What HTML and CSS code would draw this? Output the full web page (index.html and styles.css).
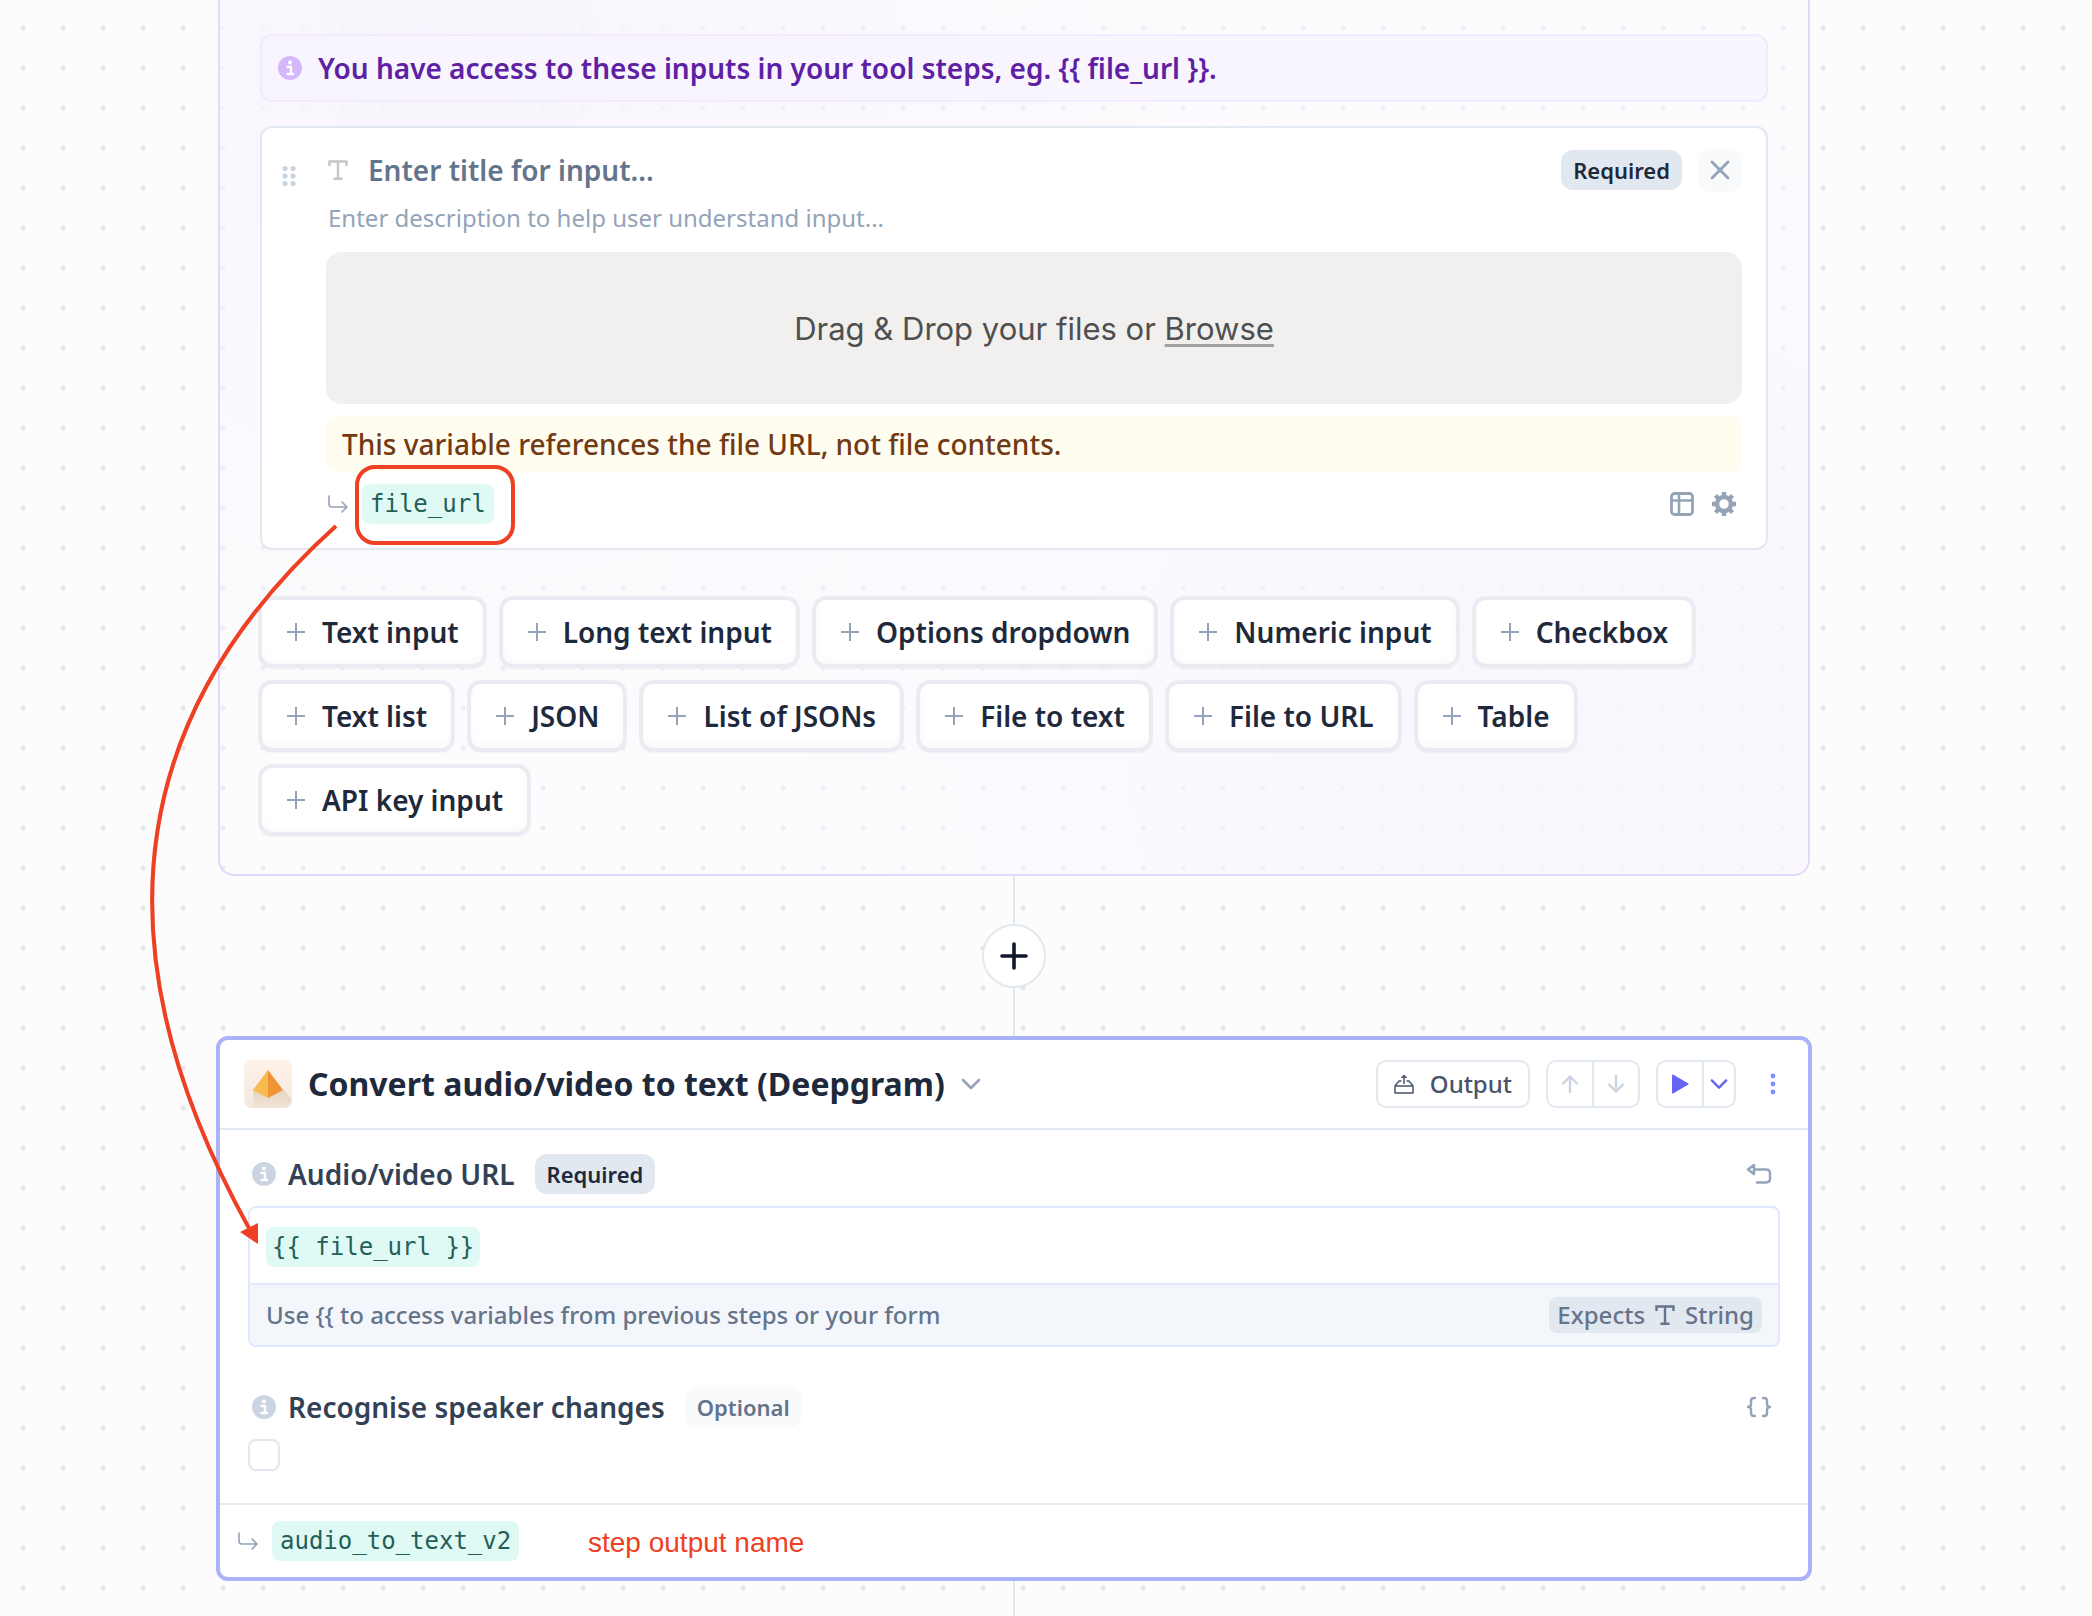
FILE: index.html
```html
<!DOCTYPE html>
<html lang="en">
<head>
<meta charset="utf-8">
<title>Tool builder</title>
<link rel="stylesheet" href="styles.css">
</head>
<body>
<svg class="sprite" aria-hidden="true">
  <symbol id="info" viewBox="0 0 24 24"><circle cx="12" cy="12" r="12" fill="currentColor"/><circle cx="12" cy="6.500" r="2" fill="#fff"/><path d="M9.500 11h3.500v6.500M9.500 18h5.500" fill="none" stroke="#fff" stroke-width="2.400" stroke-linecap="round" stroke-linejoin="round"/></symbol>
  <symbol id="type" viewBox="0 0 20 20"><path d="M1.500 6V1.500h17V6M10 1.500v17M5.500 18.800h9" fill="none" stroke="currentColor" stroke-width="2.400"/></symbol>
  <symbol id="plus" viewBox="0 0 20 20"><path d="M10 1v18M1 10h18" fill="none" stroke="currentColor" stroke-width="2"/></symbol>
  <symbol id="hook" viewBox="0 0 20 20"><path d="M1 2v8q0 3 3 3h14M14 8l5 5-5 5" fill="none" stroke="currentColor" stroke-width="1.600" stroke-linecap="round" stroke-linejoin="round"/></symbol>
  <symbol id="chevron" viewBox="0 0 20 20"><path d="M2 6l8 8 8-8" fill="none" stroke="currentColor" stroke-width="2.600" stroke-linecap="round" stroke-linejoin="round"/></symbol>
</svg>
<main class="canvas">
  <section class="inputs" aria-label="Inputs">
    <p class="notice"><svg class="i24"><use href="#info"/></svg>You have access to these inputs in your tool steps, eg. {{ file_url }}.</p>
    <article class="field-card">
      <button class="grip" aria-label="Reorder"><svg width="14" height="22" viewBox="0 0 14 22" fill="currentColor"><circle cx="3" cy="3.500" r="2.600"/><circle cx="11" cy="3.500" r="2.600"/><circle cx="3" cy="11" r="2.600"/><circle cx="11" cy="11" r="2.600"/><circle cx="3" cy="18.500" r="2.600"/><circle cx="11" cy="18.500" r="2.600"/></svg></button>
      <div class="field-main">
        <div class="field-head">
          <svg class="i20 faint"><use href="#type"/></svg>
          <input class="title-input" type="text" placeholder="Enter title for input..." aria-label="Input title">
          <span class="badge">Required</span>
          <button class="close" aria-label="Remove input"><svg width="20" height="20" viewBox="0 0 20 20"><path d="M2 2l16 16M18 2L2 18" stroke="currentColor" stroke-width="2.800" stroke-linecap="round"/></svg></button>
        </div>
        <input class="desc-input" type="text" placeholder="Enter description to help user understand input..." aria-label="Input description">
        <div class="dropzone"><span>Drag &amp; Drop your files or <a href="#browse">Browse</a></span></div>
        <p class="warning">This variable references the file URL, not file contents.</p>
        <div class="var-row">
          <svg class="i20"><use href="#hook"/></svg>
          <code class="chip">file_url</code>
          <span class="spacer"></span>
          <button class="icon-btn" aria-label="Table view"><svg width="24" height="24" viewBox="0 0 24 24"><rect x="1.500" y="1.500" width="21" height="21" rx="3" fill="none" stroke="currentColor" stroke-width="2.800"/><path d="M1.500 8.500h21M9 1.500v21" stroke="currentColor" stroke-width="2.600"/></svg></button>
          <button class="icon-btn" aria-label="Settings"><svg width="24" height="24" viewBox="0 0 24 24"><circle cx="12" cy="12" r="7" fill="none" stroke="currentColor" stroke-width="4.400"/><path d="M12 0v4M12 20v4M0 12h4M20 12h4M3.500 3.500l3 3M17.500 17.500l3 3M20.500 3.500l-3 3M6.500 17.500l-3 3" stroke="currentColor" stroke-width="4.400"/></svg></button>
        </div>
      </div>
    </article>
    <div class="add-list">
      <button class="add"><svg class="i20"><use href="#plus"/></svg>Text input</button>
      <button class="add"><svg class="i20"><use href="#plus"/></svg>Long text input</button>
      <button class="add"><svg class="i20"><use href="#plus"/></svg>Options dropdown</button>
      <button class="add"><svg class="i20"><use href="#plus"/></svg>Numeric input</button>
      <button class="add"><svg class="i20"><use href="#plus"/></svg>Checkbox</button>
      <button class="add"><svg class="i20"><use href="#plus"/></svg>Text list</button>
      <button class="add"><svg class="i20"><use href="#plus"/></svg>JSON</button>
      <button class="add"><svg class="i20"><use href="#plus"/></svg>List of JSONs</button>
      <button class="add"><svg class="i20"><use href="#plus"/></svg>File to text</button>
      <button class="add"><svg class="i20"><use href="#plus"/></svg>File to URL</button>
      <button class="add"><svg class="i20"><use href="#plus"/></svg>Table</button>
      <button class="add"><svg class="i20"><use href="#plus"/></svg>API key input</button>
    </div>
  </section>

  <div class="connector">
    <button class="add-step" aria-label="Add step"><svg width="28" height="28" viewBox="0 0 28 28"><path d="M14 2v24M2 14h24" stroke="currentColor" stroke-width="3.600" stroke-linecap="round"/></svg></button>
  </div>

  <section class="step" aria-label="Convert audio/video to text">
    <header class="step-head">
      <svg class="logo" viewBox="0 0 48 48"><defs><linearGradient id="lg" x1="0" y1="0" x2="0" y2="1"><stop offset="0" stop-color="#fff3e9"/><stop offset="1" stop-color="#f3e8dd"/></linearGradient><linearGradient id="sh" x1="0" y1="0" x2="0" y2="1"><stop offset="0" stop-color="#e3d2bd"/><stop offset="1" stop-color="#f2e6da"/></linearGradient></defs><rect width="48" height="48" rx="8" fill="url(#lg)"/><path d="M9 30l30-1 9 11a8 8 0 0 1-8 8H10z" fill="url(#sh)"/><path d="M24 10L9 30l15 8z" fill="#f7ba4c"/><path d="M24 10l15 20-15 8z" fill="#f19234"/></svg>
      <h2 class="step-title">Convert audio/video to text (Deepgram)</h2>
      <button class="icon-btn" aria-label="Step type"><svg class="i20"><use href="#chevron"/></svg></button>
      <span class="spacer"></span>
      <button class="tool output"><svg width="20" height="20" viewBox="0 0 20 20" fill="none" stroke="currentColor" stroke-width="1.500" stroke-linejoin="round"><path d="M1 12h18v7H1zM1 12l4-5h2.500M19 12l-4-5h-2.500M10 10V1.500M7.500 4L10 1.500 12.500 4"/></svg>Output</button>
      <div class="group">
        <button class="tool pale" aria-label="Move up" disabled><svg width="18" height="18" viewBox="0 0 18 18"><path d="M9 17V1.500M2 8.500l7-7 7 7" fill="none" stroke="currentColor" stroke-width="2.400" stroke-linecap="round" stroke-linejoin="round"/></svg></button>
        <button class="tool pale" aria-label="Move down" disabled><svg width="18" height="18" viewBox="0 0 18 18"><path d="M9 1v15.500M2 9.500l7 7 7-7" fill="none" stroke="currentColor" stroke-width="2.400" stroke-linecap="round" stroke-linejoin="round"/></svg></button>
      </div>
      <div class="group">
        <button class="tool run" aria-label="Run step"><svg width="18" height="20" viewBox="0 0 18 20"><path d="M2 1.500L16.500 10 2 18.500z" fill="currentColor" stroke="currentColor" stroke-width="2" stroke-linejoin="round"/></svg></button>
        <button class="tool run-more" aria-label="Run options"><svg width="18" height="18"><use href="#chevron"/></svg></button>
      </div>
      <button class="kebab" aria-label="More"><svg width="6" height="22" viewBox="0 0 6 22" fill="currentColor"><circle cx="3" cy="3" r="2.400"/><circle cx="3" cy="11" r="2.400"/><circle cx="3" cy="19" r="2.400"/></svg></button>
    </header>
    <div class="step-body">
      <div class="param">
        <div class="param-head">
          <svg class="i24 info"><use href="#info"/></svg>
          <span class="param-label">Audio/video URL</span>
          <span class="badge">Required</span>
          <span class="spacer"></span>
          <button class="icon-btn" aria-label="Reset"><svg width="26" height="24" viewBox="0 0 26 24"><path d="M8 7.500h12q4 0 4 4v5q0 4-4 4h-9M8 3L2 7.500 8 12z" fill="none" stroke="currentColor" stroke-width="2.400" stroke-linecap="round" stroke-linejoin="round"/></svg></button>
        </div>
        <div class="editor">
          <div class="editor-value"><code class="chip tight">{{ file_url }}</code></div>
          <div class="editor-foot"><span>Use {{ to access variables from previous steps or your form</span>
            <span class="expects">Expects <svg class="i20"><use href="#type"/></svg> String</span></div>
        </div>
      </div>
      <div class="param">
        <div class="param-head">
          <svg class="i24 info"><use href="#info"/></svg>
          <label class="param-label" for="speakers">Recognise speaker changes</label>
          <span class="badge optional">Optional</span>
          <span class="spacer"></span>
          <button class="icon-btn" aria-label="Use variable"><svg width="26" height="24" viewBox="0 0 26 24"><path d="M9 3H8Q5 3 5 6v3q0 3-3 3 3 0 3 3v3q0 3 3 3h1M17 3h1q3 0 3 3v3q0 3 3 3-3 0-3 3v3q0 3-3 3h-1" fill="none" stroke="currentColor" stroke-width="2.400" stroke-linecap="round" stroke-linejoin="round"/></svg></button>
        </div>
        <input class="check" type="checkbox" id="speakers">
      </div>
    </div>
    <footer class="step-foot"><svg class="i20"><use href="#hook"/></svg><code class="chip">audio_to_text_v2</code></footer>
  </section>
  <div class="tail"></div>

  <div class="mark-box"></div>
  <svg class="mark-arrow" width="240" height="740" viewBox="0 0 240 740"><path d="M216 16Q-102 302 130 720" fill="none" stroke="#ee4023" stroke-width="4"/><path d="M138 734l-18-12 18-9z" fill="#ee4023"/></svg>
  <p class="mark-text">step output name</p>
</main>
</body>
</html>
```
FILE: styles.css
```css
* { box-sizing: border-box; }
body { margin: 0; background: #fcfcfc; color: #1e293b; font: 28px/40px "Noto Sans", sans-serif; }
p, h2 { margin: 0; }
button { padding: 0; border: 0; background: none; color: inherit; font: inherit; cursor: pointer; }
input { padding: 0; border: 0; outline: 0; background: none; font: inherit; }
svg { display: block; flex: none; }
.sprite { position: absolute; width: 0; height: 0; }
.i20 { width: 20px; height: 20px; }
.i24 { width: 24px; height: 24px; }
.spacer { flex: 1; }

.canvas {
  position: relative;
  min-height: 100vh;
  overflow: hidden;
  display: flex;
  flex-direction: column;
  padding: 0 280px 0 216px;
  background: radial-gradient(circle, #e5e5ea 2px, transparent 3px) 3px 8px / 40px 40px;
}

.inputs {
  margin: 0 2px;
  padding: 34px 40px 40px;
  border: 2px solid #e4d7fd;
  border-top: 0;
  border-radius: 0 0 16px 16px;
  background:
    radial-gradient(circle at 15% 5%, rgba(248, 245, 254, .9), rgba(250, 248, 255, 0) 50%),
    radial-gradient(circle at 85% 85%, rgba(249, 246, 254, .9), rgba(251, 249, 255, 0) 60%),
    rgba(252, 251, 255, .3);
}
.notice {
  display: flex;
  align-items: center;
  gap: 16px;
  height: 68px;
  padding: 0 16px;
  border: 2px solid #f2ebfe;
  border-radius: 12px;
  background: #f8f5ff;
  color: #5f21a4;
  font-weight: 600;
}
.notice svg { color: #d5b8fb; }

.field-card {
  display: flex;
  margin-top: 24px;
  padding: 20px 24px 24px 20px;
  border: 2px solid #e2e8f0;
  border-radius: 12px;
  background: #fff;
}
.grip { width: 44px; height: 56px; color: #cbd5e1; }
.field-main { flex: 1; min-width: 0; }
.field-head { display: flex; align-items: center; gap: 20px; height: 44px; padding-left: 2px; }
.faint { color: #c4c6ca; }
.title-input { flex: 1; height: 40px; font-weight: 600; color: #64748b; }
.title-input::placeholder { color: #64748b; }
.badge {
  padding: 0 12px;
  border-radius: 12px;
  background: #e2e8f0;
  color: #1e293b;
  font-size: 22px;
  font-weight: 600;
}
.field-head .badge { margin-right: -4px; }
.close { display: grid; place-items: center; width: 44px; height: 44px; border-radius: 14px; background: #f8fafc; color: #94a3b8; }
.desc-input { display: block; width: 100%; height: 32px; margin-top: 10px; padding-left: 2px; font-size: 24px; }
.desc-input::placeholder { color: #94a3b8; }
.dropzone {
  display: grid;
  place-items: center;
  height: 152px;
  margin-top: 18px;
  padding-top: 2px;
  border-radius: 16px;
  background: #f1f0ef;
  color: #4f4f4f;
  font: 31px/40px Inter, sans-serif;
}
.dropzone a { color: inherit; text-decoration-color: #a1a1a0; text-decoration-thickness: 3px; text-underline-offset: 4px; }
.warning { margin-top: 12px; padding: 8px 16px; border-radius: 12px; background: #fffdf0; color: #713a14; font-weight: 500; }
.var-row { display: flex; align-items: center; gap: 14px; margin-top: 12px; padding: 0 6px 0 2px; color: #94a3b8; }
.var-row .icon-btn + .icon-btn { margin-left: 4px; }
.chip {
  padding: 0 8px;
  border-radius: 8px;
  background: #dffaf4;
  color: #235f58;
  font: 24px/40px "DejaVu Sans Mono", monospace;
}
.tight { padding: 0 6px; }
.icon-btn { color: #94a3b8; }

.add-list { display: flex; flex-wrap: wrap; gap: 16px; margin-top: 48px; }
.add {
  display: flex;
  align-items: center;
  gap: 16px;
  height: 68px;
  padding: 0 24px;
  border: 2px solid #e9ebf2;
  border-radius: 12px;
  background: #fff;
  box-shadow: 0 0 0 2px #ececf2, 0 2px 2px #d9d9e0, inset 0 -4px 8px #fafafb;
  font-weight: 600;
}
.add svg { color: #94a3b8; }

.connector { display: flex; justify-content: center; padding: 48px 0; background: linear-gradient(#e2e8f0, #e2e8f0) center / 2px 100% no-repeat; }
.add-step { display: grid; place-items: center; width: 64px; height: 64px; border: 2px solid #e2e8f0; border-radius: 50%; background: #fff; color: #0f172a; }
.tail { flex: 1; background: linear-gradient(#e2e8f0, #e2e8f0) center / 2px 100% no-repeat; }

.step { border: 4px solid #a8b3f8; border-radius: 12px; background: #fff; }
.step-head { display: flex; align-items: center; gap: 16px; height: 90px; padding: 0 32px 0 24px; border-bottom: 2px solid #e2e8f0; }
.logo { width: 48px; height: 48px; }
.step-title { font-size: 32px; font-weight: 700; }
.tool { display: flex; align-items: center; justify-content: center; height: 48px; border: 2px solid #e2e8f0; border-radius: 10px; color: #475569; font-size: 24px; font-weight: 500; }
.output { gap: 16px; padding: 0 16px; }
.group { display: flex; }
.group .tool { width: 48px; }
.group .tool:first-child { border-radius: 10px 0 0 10px; }
.group .tool:last-child { margin-left: -2px; border-radius: 0 10px 10px 0; }
.group .pale { color: #cbd5e1; }
.group .run { color: #6366f1; }
.group .run-more { width: 34px; color: #6366f1; }
.kebab { padding: 0 0 0 18px; color: #818cf8; }

.step-body { display: grid; gap: 40px; padding: 24px 28px 32px; }
.param-head { display: flex; align-items: center; gap: 12px; padding: 0 8px 0 4px; }
.info { color: #cbd5e1; }
.param-label { color: #334155; font-weight: 600; }
.param-head .badge { margin-left: 8px; }
.badge.optional { background: #f8fafc; color: #64748b; }
.editor { margin-top: 12px; border: 2px solid #e0e7ff; border-radius: 8px; }
.editor-value { display: flex; padding: 19px 16px 16px; }
.editor-foot { display: flex; align-items: center; justify-content: space-between; padding: 12px 16px; border-top: 2px solid #e0e7ff; border-radius: 0 0 6px 6px; background: #f3f6fa; color: #64748b; font-size: 24px; font-weight: 500; line-height: 36px; }
.expects { display: flex; align-items: center; gap: 10px; padding: 0 8px; border-radius: 8px; background: #e2e8f0; }
.check { appearance: none; display: block; width: 32px; height: 32px; margin: 12px 0 0; border: 2px solid #e2e8f0; border-radius: 8px; background: #fff; }
.step-foot { display: flex; align-items: center; gap: 14px; padding: 16px 18px; border-top: 2px solid #e8ecf1; color: #94a3b8; }

.mark-box { position: absolute; left: 355px; top: 465px; width: 160px; height: 80px; border: 4px solid #ee4023; border-radius: 20px; }
.mark-arrow { position: absolute; left: 120px; top: 510px; pointer-events: none; }
.mark-text { position: absolute; left: 588px; top: 1523px; color: #ee4023; font-family: "Liberation Sans", sans-serif; }
```
